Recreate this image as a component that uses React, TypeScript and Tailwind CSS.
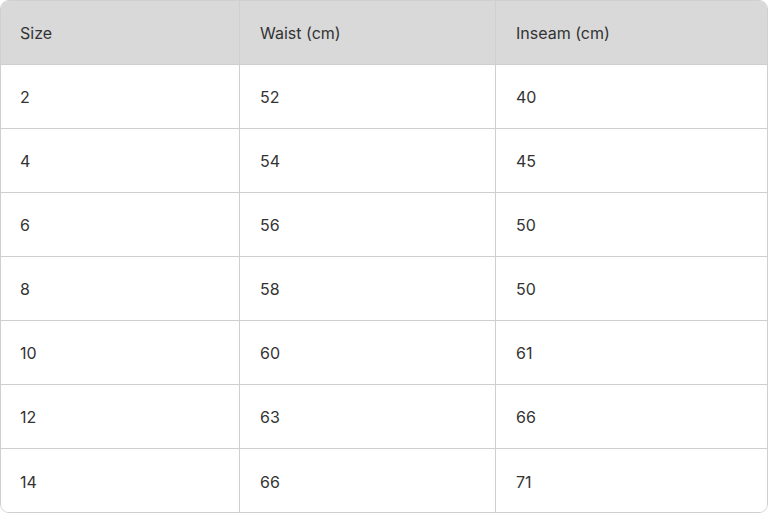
const rows = [
  ["2", "52", "40"],
  ["4", "54", "45"],
  ["6", "56", "50"],
  ["8", "58", "50"],
  ["10", "60", "61"],
  ["12", "63", "66"],
  ["14", "66", "71"],
]

function Row({ cells, header }: { cells: string[]; header?: boolean }) {
  return (
    <div
      className={`grid h-[64px] grid-cols-[239px_256px_1fr] border-b border-[#cfcfcf] last:border-b-0 ${
        header ? "bg-[#d9d9d9]" : "bg-white"
      }`}
    >
      {cells.map((c, i) => (
        <div
          key={i}
          className={`flex items-center pt-[1px] ${i === 0 ? "pl-[19px]" : "pl-5"} ${
            i < 2 ? "border-r border-[#cfcfcf]" : ""
          }`}
        >
          {c}
        </div>
      ))}
    </div>
  )
}

export default function App() {
  return (
    <div className="h-[513px] w-[768px] bg-white font-['Inter',sans-serif] text-[16px] text-[#333333]">
      <div className="h-full w-full overflow-hidden rounded-[9px] border border-[#cfcfcf]">
        <Row header cells={["Size", "Waist (cm)", "Inseam (cm)"]} />
        {rows.map((r, i) => (
          <Row key={i} cells={r} />
        ))}
      </div>
    </div>
  )
}
